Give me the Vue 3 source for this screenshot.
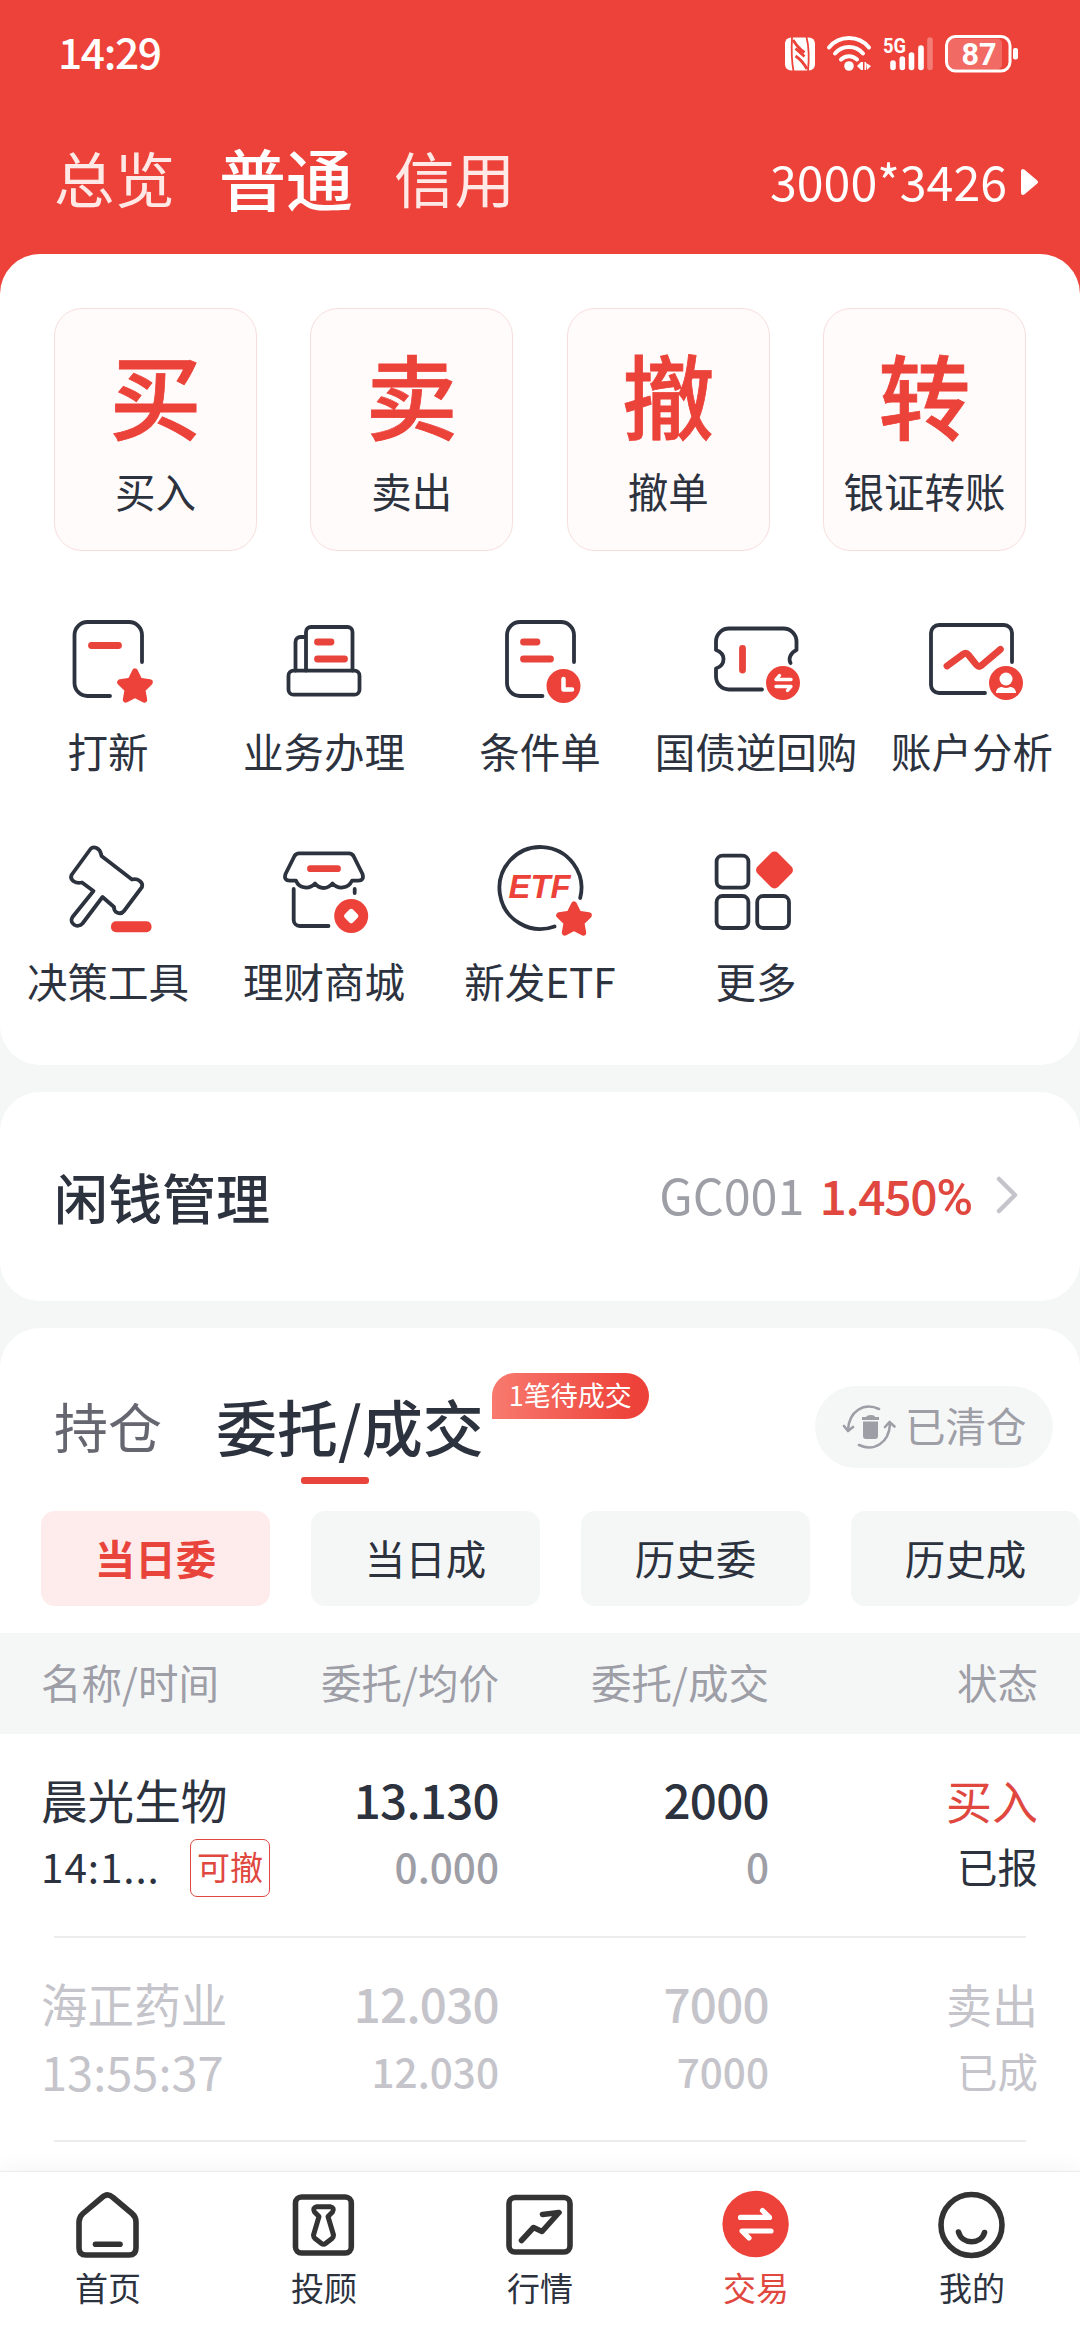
<script setup>
const actions = [
  { glyph: '买', label: '买入' },
  { glyph: '卖', label: '卖出' },
  { glyph: '撤', label: '撤单' },
  { glyph: '转', label: '银证转账' },
]

const tools = [
  { icon: 'ipo', label: '打新' },
  { icon: 'service', label: '业务办理' },
  { icon: 'condition', label: '条件单' },
  { icon: 'repo', label: '国债逆回购' },
  { icon: 'analysis', label: '账户分析' },
  { icon: 'gavel', label: '决策工具' },
  { icon: 'shop', label: '理财商城' },
  { icon: 'etf', label: '新发ETF' },
  { icon: 'more', label: '更多' },
]

const chips = ['当日委', '当日成', '历史委', '历史成']

const orders = [
  { name: '晨光生物', time: '14:1...', tag: '可撤', price: '13.130', avg: '0.000', qty: '2000', filled: '0', side: '买入', status: '已报', done: false },
  { name: '海正药业', time: '13:55:37', tag: '', price: '12.030', avg: '12.030', qty: '7000', filled: '7000', side: '卖出', status: '已成', done: true },
]

const navs = [
  { icon: 'home', label: '首页' },
  { icon: 'advisor', label: '投顾' },
  { icon: 'market', label: '行情' },
  { icon: 'trade', label: '交易' },
  { icon: 'mine', label: '我的' },
]

const star = 'M0-15.5 4.6-6.2 14.8-4.7 7.4 2.5 9.2 12.7 0 7.9-9.2 12.7-7.4 2.5-14.8-4.7-4.6-6.2Z'
</script>

<template>
  <div class="page">
    <header class="header">
      <div class="status">
        <span class="clock">14:29</span>
        <svg class="status-icons" width="236" height="44" viewBox="0 0 236 44">
          <rect x="1" y="5.500" width="30" height="33" rx="6" fill="#fff" />
          <path d="M9.500 39C7.500 29 7.500 15 8 5M22.500 5C25 15 25 29 24 39" fill="none" stroke="#ed4239" stroke-width="1.800" />
          <path d="M9 8Q14 16 20.500 20.500M11.500 16.500 20.500 24.500M11.500 24Q18 28 23 37" fill="none" stroke="#ed4239" stroke-width="2.800" />
          <g fill="none" stroke="#fff" stroke-width="4" stroke-linecap="round">
            <path d="M45 15.500a26 26 0 0 1 40 0" />
            <path d="M51 21.500a18.500 18.500 0 0 1 28 0" />
            <path d="M57 27.500a11.500 11.500 0 0 1 16 0" />
          </g>
          <circle cx="65" cy="34" r="4.800" fill="#fff" />
          <path d="m73 34 4-4v8zM77 30h2v8h-2zM80.500 30h1.500v8h-1.500zM82 31l5 3-4 4z" fill="#fff" />
          <text x="99" y="21" class="net" textLength="23" lengthAdjust="spacingAndGlyphs">5G</text>
          <g stroke="#fff" stroke-width="5.600" stroke-linecap="round">
            <path d="M109 31v4.500M118.300 27v8.500M127.500 23v12.500M137 16v19.500" />
            <path d="M146 8v27.500" opacity=".3" />
          </g>
          <rect x="163" y="6.500" width="55" height="31" rx="5" fill="#fff" opacity=".22" />
          <rect x="162.500" y="4.500" width="63.500" height="34.500" rx="9" fill="none" stroke="#fff" stroke-width="3" />
          <rect x="229" y="16" width="5" height="11.500" rx="2" fill="#fff" />
          <text x="177.500" y="33" class="level" textLength="35" lengthAdjust="spacingAndGlyphs">87</text>
        </svg>
      </div>
      <div class="tabs">
        <span class="tab">总览</span>
        <span class="tab on">普通</span>
        <span class="tab">信用</span>
        <span class="account">3000*3426</span>
        <svg class="caret" width="20" height="30" viewBox="0 0 20 30">
          <path d="M3 4v22l13-11z" fill="#fff" stroke="#fff" stroke-width="4" stroke-linejoin="round" />
        </svg>
      </div>
    </header>

    <main class="body">
      <section class="card main-card">
        <div class="actions">
          <div v-for="a in actions" :key="a.label" class="action">
            <span class="glyph">{{ a.glyph }}</span>
            <span class="action-label">{{ a.label }}</span>
          </div>
        </div>

        <div class="tools">
          <div v-for="t in tools" :key="t.icon" class="tool">
            <svg class="tool-icon" width="108" height="108" viewBox="0 0 108 108">
              <template v-if="t.icon === 'ipo'">
                <path class="ln" d="M88 58V31a13 13 0 0 0-13-13H33.500a13 13 0 0 0-13 13V79a13 13 0 0 0 13 13H56" />
                <path class="rd" d="M37.500 41.500H64.500" />
                <path class="star" :d="star" transform="translate(81 83)" />
              </template>
              <template v-else-if="t.icon === 'service'">
                <path class="ln" d="M25.500 66.500V38a5 5 0 0 1 5-5H36M36 66.500V28a5 5 0 0 1 5-5H77.500a5 5 0 0 1 5 5V66.500" />
                <rect class="ln" x="18.500" y="66.700" width="71" height="24" rx="5" />
                <path class="rd" d="M47.500 38H61M47.500 55H74.500" />
              </template>
              <template v-else-if="t.icon === 'condition'">
                <path class="ln" d="M88 58V31a13 13 0 0 0-13-13H34a13 13 0 0 0-13 13V79a13 13 0 0 0 13 13H56.500" />
                <path class="rd" d="M37.500 38H51M37.500 55H64.500" />
                <circle class="fill" cx="77.500" cy="82" r="17" />
                <path class="wt" d="M77.500 75V85.500H86" />
              </template>
              <template v-else-if="t.icon === 'repo'">
                <path class="ln" d="M88.500 59C86 54 89 48.500 94.500 46V37.500a13 13 0 0 0-13-13H27a13 13 0 0 0-13 13V46C24 49.500 24 61 14 64.500V72.500a13 13 0 0 0 13 13H60" />
                <path class="rd" d="M40.500 44.500V66" />
                <circle class="fill" cx="81" cy="79" r="17" />
                <path class="wt thin" d="M89 75.500H74L77.500 71.500M74 82.500H89L85.500 86.500" />
              </template>
              <template v-else-if="t.icon === 'analysis'">
                <path class="ln" d="M94 58V29a8 8 0 0 0-8-8H21a8 8 0 0 0-8 8V81a8 8 0 0 0 8 8H67" />
                <path class="rd" d="M29 62 45 50.200Q48 48 50.500 51L58.500 61Q61 64 64 61L82.400 45.300" />
                <circle class="fill" cx="88" cy="79" r="17" />
                <circle cx="88" cy="75" r="6.500" fill="#fff" />
                <path d="M78 89c0-4 3-6 6-6q4 2 8 0c3 0 6 2 6 6z" fill="#fff" />
              </template>
              <template v-else-if="t.icon === 'gavel'">
                <path class="ln" d="M36.500 15C39.500 11.500 46 14 47 20L47.500 22 78 45.500C84 44 89.500 48.500 88 53L70 77C66.500 81.500 59.500 78.500 60 73L48.500 63 28.500 89.500C23.500 95 14.500 89.500 18.500 83L39.500 57 28 48.500C21.500 50 15.500 46 17.500 41Z" />
                <rect class="fill" x="57" y="87.300" width="40.500" height="11" rx="5" />
              </template>
              <template v-else-if="t.icon === 'shop'">
                <path class="ln" d="M29 19.300H79Q82 19.300 83.500 22L92.500 40Q94.500 46.700 88 46.700H82C78 55 68 55.500 62.500 49.500 57 55.500 50 55.500 45 49.500 39.500 55.500 29.500 55 26 46.700H20Q13.500 46.700 15.500 40L24.500 22Q26 19.300 29 19.300Z" />
                <path class="ln" d="M23.700 55V86a6 6 0 0 0 6 6H58.500M84.700 55v4" />
                <path class="rd" d="M40.500 34.700H67.500" />
                <circle class="fill" cx="81.200" cy="82" r="17" />
                <rect x="-5.800" y="-5.800" width="11.600" height="11.600" rx="2.500" fill="#fff" transform="translate(81.200 82) rotate(45)" />
              </template>
              <template v-else-if="t.icon === 'etf'">
                <path class="ln" d="M94.200 64A41 41 0 1 0 68.500 92.500" />
                <text class="etf" x="22.500" y="64" textLength="62" lengthAdjust="spacingAndGlyphs">ETF</text>
                <path class="star" :d="star" transform="translate(88 86)" />
              </template>
              <template v-else>
                <rect class="ln" x="14.600" y="21.600" width="31.800" height="32" rx="6" />
                <rect class="ln" x="14.600" y="62" width="31.800" height="32" rx="6" />
                <rect class="ln" x="55.200" y="62" width="31.800" height="32" rx="6" />
                <rect class="fill" x="-14.500" y="-14.500" width="29" height="29" rx="5" transform="translate(72.500 36) rotate(45)" />
              </template>
            </svg>
            <span class="tool-label">{{ t.label }}</span>
          </div>
        </div>
      </section>

      <section class="card idle">
        <span class="idle-title">闲钱管理</span>
        <span class="code">GC001</span>
        <span class="rate">1.450<span class="pct">%</span></span>
        <svg class="chev" width="24" height="40" viewBox="0 0 24 40">
          <path d="M4 4 20 20 4 36" fill="none" stroke="#c4c4ca" stroke-width="4.500" stroke-linecap="round" stroke-linejoin="round" />
        </svg>
      </section>

      <section class="card orders">
        <div class="order-tabs">
          <span class="order-tab">持仓</span>
          <span class="order-tab on">委托/成交<i class="pending">1笔待成交</i></span>
          <span class="cleared">
            <svg width="54" height="48" viewBox="0 0 54 48">
              <g fill="none" stroke="#9e9ea7" stroke-width="2.600" stroke-linecap="round" stroke-linejoin="round">
                <path d="M37 6C22-1 7 8 6 27M2 23l4 5 5-4" />
                <path d="M17 42C32 49 47 40 48 21M43 24l4.500-5 5 4.500" />
              </g>
              <path d="M20 14h4q1-2 5-2t4 2h4v3H20zM21 18.500h15V33q0 3-3 3H24q-3 0-3-3z" fill="#9e9ea7" />
            </svg>
            <span class="cleared-label">已清仓</span>
          </span>
        </div>

        <div class="chips">
          <span v-for="(c, i) in chips" :key="c" class="chip" :class="{ on: i === 0 }">{{ c }}</span>
        </div>

        <div class="row thead">
          <span>名称/时间</span>
          <span>委托/均价</span>
          <span>委托/成交</span>
          <span>状态</span>
        </div>

        <div v-for="o in orders" :key="o.name" class="order" :class="{ done: o.done }">
          <div class="row top">
            <span class="name">{{ o.name }}</span>
            <span class="num">{{ o.price }}</span>
            <span class="num">{{ o.qty }}</span>
            <span class="side">{{ o.side }}</span>
          </div>
          <div class="row sub">
            <span class="time">{{ o.time }}<i v-if="o.tag" class="tag">{{ o.tag }}</i></span>
            <span class="num">{{ o.avg }}</span>
            <span class="num">{{ o.filled }}</span>
            <span>{{ o.status }}</span>
          </div>
        </div>
      </section>
    </main>

    <nav class="nav">
      <div v-for="n in navs" :key="n.icon" class="nav-item" :class="{ on: n.icon === 'trade' }">
        <svg width="72" height="72" viewBox="0 0 72 72">
          <template v-if="n.icon === 'home'">
            <path class="nl" d="M30 9.500Q35.500 4 41 9.500L60 25.500Q64 29 64 34V60Q64 67 57 67H14Q7 67 7 60V34Q7 29 11 25.500Z" />
            <path class="nl" d="M23.500 56.300H48" />
          </template>
          <template v-else-if="n.icon === 'advisor'">
            <rect class="nl" x="7.500" y="9" width="55.800" height="56" rx="6" />
            <path class="nl slim" d="M29 18.700H42Q47 20 44.500 24L40 28.500 45.500 47Q45.500 49 44 50.500L37.500 55.500Q35.500 57 33.500 55.500L27 50.500Q25.500 49 25.500 47L31 28.500 26.500 24Q24 20 29 18.700Z" />
          </template>
          <template v-else-if="n.icon === 'market'">
            <rect class="nl" x="5" y="9.500" width="61" height="54.500" rx="6" />
            <path class="nl" d="M17.500 52.500 29.500 39.500 38 43.500 55 24.500 38.500 26.500" />
          </template>
          <template v-else-if="n.icon === 'trade'">
            <circle cx="35.600" cy="36" r="33.200" fill="#ed4239" />
            <path class="nw" d="M20.500 29.400H49.500L42.500 22.500M51 43H22L29 50" />
          </template>
          <template v-else>
            <circle class="nl" cx="35.500" cy="37" r="30.500" />
            <path class="nl" d="M22.500 44C26 57 45 57 48.500 44.500" />
          </template>
        </svg>
        <span class="nav-label">{{ n.label }}</span>
      </div>
    </nav>
  </div>
</template>

<style>
body {
  background: #f5f7f7;
}
</style>

<style scoped>
.page {
  width: 1080px;
  height: 2340px;
  display: flex;
  flex-direction: column;
  overflow: hidden;
  background: #f5f7f7;
  color: #2c323e;
  font-family: "Noto Sans CJK SC", "Noto Sans", sans-serif;
  font-size: 40.5px;
  white-space: nowrap;
}

i {
  font-style: normal;
}

svg {
  display: block;
  flex: none;
}

/* red header */
.header {
  flex: none;
  height: 294px;
  margin-bottom: -40px;
  background: #ed4239;
  color: #fff;
}

.status {
  height: 102px;
  padding: 0 60px 0 58px;
  display: flex;
  align-items: center;
  justify-content: space-between;
}

.clock {
  font-size: 42.5px;
  font-weight: 500;
  letter-spacing: -1.4px;
  line-height: 102px;
}

.status-icons {
  margin-top: 6px;
}

.net {
  font: 700 21px Roboto, sans-serif;
  fill: #fff;
}

.level {
  font: 700 32px Roboto, sans-serif;
  fill: #fff;
}

.tabs {
  display: flex;
  align-items: center;
  height: 150px;
  padding: 0 40px 0 54px;
}

.tab {
  font-size: 60.5px;
  line-height: 90px;
  padding-bottom: 1px;
  color: #ffe9e7;
  margin-right: 44px;
}

.tab.on {
  font-size: 67px;
  font-weight: 500;
  color: #fff;
  margin-right: 41px;
}

.account {
  margin-left: auto;
  margin-right: 13px;
  padding-top: 5px;
  font-size: 48.3px;
}

.caret {
  margin-top: 9px;
}

/* cards */
.body {
  flex: 1;
  min-height: 0;
  overflow: hidden;
  display: flex;
  flex-direction: column;
  gap: 27px;
}

.card {
  flex: none;
  background: #fff;
  border-radius: 40px;
}

.main-card {
  height: 811px;
}

.actions {
  display: flex;
  justify-content: space-between;
  padding: 54px 54px 0;
}

.action {
  box-sizing: border-box;
  width: 203px;
  height: 243px;
  padding-top: 37px;
  display: flex;
  flex-direction: column;
  align-items: center;
  border: 1px solid #f6dedc;
  border-radius: 28px;
  background: #fffbfa;
}

.glyph {
  font-size: 92px;
  line-height: 94px;
  font-weight: 500;
  color: #eb4239;
  -webkit-text-stroke: 0.8px #eb4239;
}

.action-label {
  margin-top: 21px;
  line-height: 60px;
}

.tools {
  display: grid;
  grid-template-columns: repeat(5, 216px);
  grid-auto-rows: 230px;
  padding-top: 53px;
}

.tool {
  display: flex;
  flex-direction: column;
  align-items: center;
}

.tool-label {
  margin-top: 9px;
  line-height: 60px;
}

.ln {
  fill: none;
  stroke: #2c323e;
  stroke-width: 3.8;
  stroke-linecap: round;
  stroke-linejoin: round;
}

.rd {
  fill: none;
  stroke: #e8443b;
  stroke-width: 6.8;
  stroke-linecap: round;
}

.fill {
  fill: #ed4239;
}

.star {
  fill: #ed4239;
  stroke: #ed4239;
  stroke-width: 6;
  stroke-linejoin: round;
}

.wt {
  fill: none;
  stroke: #fff;
  stroke-width: 4.5;
  stroke-linecap: round;
  stroke-linejoin: round;
}

.wt.thin {
  stroke-width: 3.4;
}

.etf {
  font: italic 700 33px "Liberation Sans", sans-serif;
  fill: #ed4239;
}

/* idle cash */
.idle {
  height: 209px;
  box-sizing: border-box;
  padding: 0 61px 0 54px;
  display: flex;
  align-items: center;
}

.idle-title {
  font-size: 54px;
  font-weight: 500;
  margin-right: auto;
}

.code {
  font-size: 48.5px;
  color: #9e9ea7;
  margin-top: -5px;
}

.rate {
  margin: -5px 22px 0 15px;
  font-size: 48px;
  font-weight: 500;
  letter-spacing: -1.4px;
  color: #e0483f;
}

.pct {
  font-family: Roboto, sans-serif;
  font-size: 50px;
  letter-spacing: 0;
}

.chev {
  margin-top: -3px;
}

/* orders */
.orders {
  height: 900px;
}

.order-tabs {
  box-sizing: border-box;
  display: flex;
  align-items: center;
  height: 183px;
  padding: 12px 27px 0 54px;
}

.order-tab {
  font-size: 54px;
  line-height: 80px;
  color: #666671;
}

.order-tab.on {
  position: relative;
  margin-left: 54px;
  font-size: 61px;
  font-weight: 500;
  color: #2c323e;
}

.order-tab.on::after {
  content: "";
  position: absolute;
  left: 50%;
  bottom: -18px;
  width: 68px;
  height: 7px;
  margin-left: -49px;
  border-radius: 3px;
  background: #e8443b;
}

.pending {
  position: absolute;
  left: 100%;
  top: -13px;
  width: 157px;
  height: 46px;
  margin-left: 8px;
  border-radius: 23px 23px 23px 0;
  background: linear-gradient(90deg, #f87a6f, #ed4239 90%);
  color: #fff;
  font-size: 27px;
  font-weight: 400;
  line-height: 44px;
  text-align: center;
}

.cleared {
  margin-left: auto;
  margin-top: 3px;
  box-sizing: border-box;
  width: 238px;
  height: 82px;
  padding-left: 27px;
  display: flex;
  align-items: center;
  gap: 9px;
  border-radius: 41px;
  background: #f5f7f7;
  color: #9e9ea7;
}

.cleared-label {
  line-height: 56px;
  padding-bottom: 4px;
}

.chips {
  display: flex;
  gap: 41px;
  padding-left: 41px;
  overflow: hidden;
}

.chip {
  flex: none;
  width: 229px;
  height: 95px;
  border-radius: 14px;
  background: #f5f7f7;
  line-height: 93px;
  text-align: center;
}

.chip.on {
  background: #feebeb;
  color: #e8443b;
  font-weight: 700;
}

.row {
  display: grid;
  grid-template-columns: 229px 229px 270px 269px;
  padding: 0 41px;
  align-items: center;
}

.row > * {
  text-align: right;
}

.row > :first-child {
  text-align: left;
}

.thead {
  box-sizing: border-box;
  height: 101px;
  padding-bottom: 5px;
  margin-top: 27px;
  background: #f5f7f7;
  color: #9e9ea7;
}

.order {
  position: relative;
  height: 204px;
}

.order::after {
  content: "";
  position: absolute;
  left: 54px;
  right: 54px;
  bottom: 0;
  height: 2px;
  background: #ececec;
}

.top {
  height: 68px;
  padding-top: 30px;
  font-size: 46px;
}

.top .name {
  font-size: 46.6px;
}

.top .num {
  font-size: 47.5px;
  font-weight: 500;
  letter-spacing: -0.7px;
}

.top .side {
  color: #e0483f;
}

.sub {
  height: 66px;
}

.sub .num {
  font-weight: 500;
  color: #9e9ea7;
}

.time {
  display: flex;
  align-items: center;
  justify-content: space-between;
  letter-spacing: 0.9px;
}

.tag {
  box-sizing: border-box;
  width: 80px;
  height: 58px;
  margin-top: 6px;
  border: 1.5px solid #e0483f;
  border-radius: 7px;
  color: #e0483f;
  font-size: 33px;
  letter-spacing: 0;
  line-height: 53px;
  text-align: center;
}

.done .row > * {
  color: #c4c4ca;
}

.done .time {
  font-size: 47px;
  letter-spacing: 0;
}

/* bottom navigation */
.nav {
  position: relative;
  flex: none;
  height: 168px;
  border-top: 1px solid #ececec;
  display: flex;
  background: #fff;
  box-shadow: 0 0 24px rgba(0, 0, 0, 0.06);
}

.nav-item {
  width: 216px;
  padding-top: 16px;
  display: flex;
  flex-direction: column;
  align-items: center;
}

.nav-label {
  font-size: 33px;
  line-height: 50px;
  margin-top: 2px;
}

.nav-item.on .nav-label {
  color: #e0483f;
}

.nl {
  fill: none;
  stroke: #333;
  stroke-width: 5.6;
  stroke-linecap: round;
  stroke-linejoin: round;
}

.nl.slim {
  stroke-width: 5;
}

.nw {
  fill: none;
  stroke: #fff;
  stroke-width: 5.2;
  stroke-linecap: round;
  stroke-linejoin: round;
}
</style>
